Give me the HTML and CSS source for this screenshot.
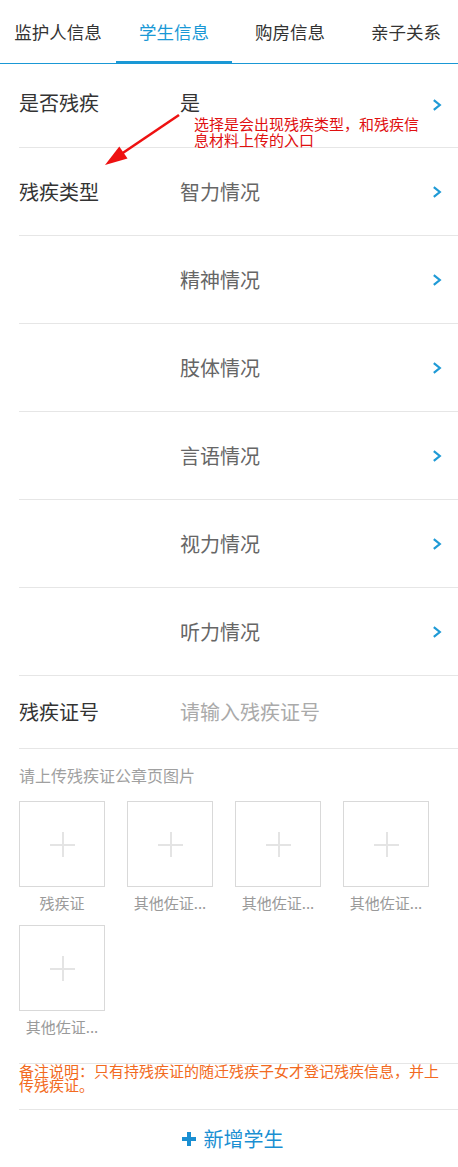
FILE: index.html
```html
<!DOCTYPE html>
<html lang="zh-CN">
<head>
<meta charset="utf-8">
<title>学生信息</title>
<link rel="stylesheet" href="styles.css">
</head>
<body>
<div class="tabs">
  <div class="tab">监护人信息</div>
  <div class="tab active">学生信息</div>
  <div class="tab">购房信息</div>
  <div class="tab">亲子关系</div>
</div>

<div class="form">
  <div class="row row-first">
    <span class="label">是否残疾</span>
    <span class="value dark">是</span>
    <svg class="chev" width="10" height="12" viewBox="0 0 10 12"><polyline points="1.8,1.2 7.8,6 1.8,10.8" fill="none" stroke="#1f9ad6" stroke-width="2.2"/></svg>
    <div class="note-red">选择是会出现残疾类型，和残疾信息材料上传的入口</div>
    <svg class="arrow" width="200" height="110" viewBox="0 0 200 110">
      <line x1="179" y1="51" x2="122" y2="89.5" stroke="#ee1111" stroke-width="2.6"/>
      <polygon points="105,101 127.5,94.5 119.3,82.5" fill="#ee1111"/>
    </svg>
  </div>
  <div class="row">
    <span class="label">残疾类型</span>
    <span class="value">智力情况</span>
    <svg class="chev" width="10" height="12" viewBox="0 0 10 12"><polyline points="1.8,1.2 7.8,6 1.8,10.8" fill="none" stroke="#1f9ad6" stroke-width="2.2"/></svg>
  </div>
  <div class="row">
    <span class="label"></span>
    <span class="value">精神情况</span>
    <svg class="chev" width="10" height="12" viewBox="0 0 10 12"><polyline points="1.8,1.2 7.8,6 1.8,10.8" fill="none" stroke="#1f9ad6" stroke-width="2.2"/></svg>
  </div>
  <div class="row">
    <span class="label"></span>
    <span class="value">肢体情况</span>
    <svg class="chev" width="10" height="12" viewBox="0 0 10 12"><polyline points="1.8,1.2 7.8,6 1.8,10.8" fill="none" stroke="#1f9ad6" stroke-width="2.2"/></svg>
  </div>
  <div class="row">
    <span class="label"></span>
    <span class="value">言语情况</span>
    <svg class="chev" width="10" height="12" viewBox="0 0 10 12"><polyline points="1.8,1.2 7.8,6 1.8,10.8" fill="none" stroke="#1f9ad6" stroke-width="2.2"/></svg>
  </div>
  <div class="row">
    <span class="label"></span>
    <span class="value">视力情况</span>
    <svg class="chev" width="10" height="12" viewBox="0 0 10 12"><polyline points="1.8,1.2 7.8,6 1.8,10.8" fill="none" stroke="#1f9ad6" stroke-width="2.2"/></svg>
  </div>
  <div class="row">
    <span class="label"></span>
    <span class="value">听力情况</span>
    <svg class="chev" width="10" height="12" viewBox="0 0 10 12"><polyline points="1.8,1.2 7.8,6 1.8,10.8" fill="none" stroke="#1f9ad6" stroke-width="2.2"/></svg>
  </div>
  <div class="row row-input">
    <span class="label">残疾证号</span>
    <span class="value placeholder">请输入残疾证号</span>
  </div>

  <div class="upload">
    <div class="upload-hint">请上传残疾证公章页图片</div>
    <div class="upload-grid">
      <div class="up-item"><div class="up-box"><span class="plus-h"></span><span class="plus-v"></span></div><div class="up-label">残疾证</div></div>
      <div class="up-item"><div class="up-box"><span class="plus-h"></span><span class="plus-v"></span></div><div class="up-label">其他佐证...</div></div>
      <div class="up-item"><div class="up-box"><span class="plus-h"></span><span class="plus-v"></span></div><div class="up-label">其他佐证...</div></div>
      <div class="up-item"><div class="up-box"><span class="plus-h"></span><span class="plus-v"></span></div><div class="up-label">其他佐证...</div></div>
      <div class="up-item"><div class="up-box"><span class="plus-h"></span><span class="plus-v"></span></div><div class="up-label">其他佐证...</div></div>
    </div>
  </div>

  <div class="remark">备注说明：只有持残疾证的随迁残疾子女才登记残疾信息，并上传残疾证。</div>

  <div class="add">
    <svg class="add-icon" width="14" height="14" viewBox="0 0 14 14"><rect x="5" y="0" width="4" height="14" fill="#1a8fd2"/><rect x="0" y="5" width="14" height="4" fill="#1a8fd2"/></svg>
    <span class="add-text">新增学生</span>
  </div>
</div>
</body>
</html>
```

FILE: styles.css
```css
html, body {
  margin: 0;
  padding: 0;
  background: #ffffff;
}
body {
  font-family: "Noto Sans CJK SC", "Noto Sans", sans-serif;
  color: #333333;
  width: 458px;
  overflow: hidden;
}

.tabs {
  display: flex;
  border-bottom: 1px solid #1a98d5;
  overflow: hidden;
}
.tab {
  flex: 0 0 116px;
  height: 63px;
  display: flex;
  align-items: center;
  justify-content: center;
  font-size: 17.5px;
  color: #333333;
}
.tab.active {
  color: #1a98d5;
  box-shadow: inset 0 -2px 0 #1a98d5;
}

.form {
  padding-left: 19px;
}

.row {
  position: relative;
  display: flex;
  align-items: center;
  height: 87px;
  border-bottom: 1px solid #e6e6e6;
  padding-right: 16px;
}
.row-first {
  height: 83px;
  align-items: flex-start;
}
.row-first .label,
.row-first .value {
  margin-top: 25px;
}
.row-first .chev {
  margin-top: 35px;
}
.row-input {
  height: 72px;
}

.label {
  flex: 0 0 161px;
  font-size: 20px;
  line-height: 28px;
  color: #333333;
}
.value {
  flex: 1;
  font-size: 20px;
  line-height: 28px;
  color: #666666;
}
.value.dark {
  color: #333333;
}
.value.placeholder {
  color: #aaaaaa;
}
.chev {
  flex: 0 0 auto;
  display: block;
}

.note-red {
  position: absolute;
  left: 175px;
  top: 52px;
  width: 228px;
  font-size: 15px;
  line-height: 16px;
  color: #e01010;
}
.arrow {
  position: absolute;
  left: -19px;
  top: 0;
  overflow: visible;
  pointer-events: none;
}

.upload {
  padding-top: 16px;
}
.upload-hint {
  font-size: 16px;
  line-height: 20px;
  color: #a0a0a0;
}
.upload-grid {
  display: flex;
  flex-wrap: wrap;
  column-gap: 22px;
  row-gap: 12px;
  margin-top: 16px;
}
.up-item {
  width: 86px;
  display: flex;
  flex-direction: column;
  align-items: center;
}
.up-box {
  position: relative;
  width: 84px;
  height: 84px;
  border: 1px solid #d9d9d9;
}
.plus-h {
  position: absolute;
  left: 30px;
  top: 42px;
  width: 25px;
  height: 2px;
  background: #e4e4e4;
}
.plus-v {
  position: absolute;
  left: 42px;
  top: 30px;
  width: 2px;
  height: 25px;
  background: #e4e4e4;
}
.up-label {
  margin-top: 6px;
  font-size: 15px;
  line-height: 20px;
  color: #9a9a9a;
  white-space: nowrap;
}

.remark {
  margin-top: 26px;
  border-top: 1px solid #e6e6e6;
  border-bottom: 1px solid #e6e6e6;
  padding: 0 15px 17px 0;
  font-size: 15px;
  line-height: 14px;
  color: #f26a21;
}

.add {
  display: flex;
  align-items: center;
  justify-content: center;
  gap: 8px;
  padding-top: 14px;
  padding-right: 12px;
  height: 30px;
}
.add-icon {
  display: block;
}
.add-text {
  font-size: 20px;
  line-height: 30px;
  color: #1a8fd2;
}
```
